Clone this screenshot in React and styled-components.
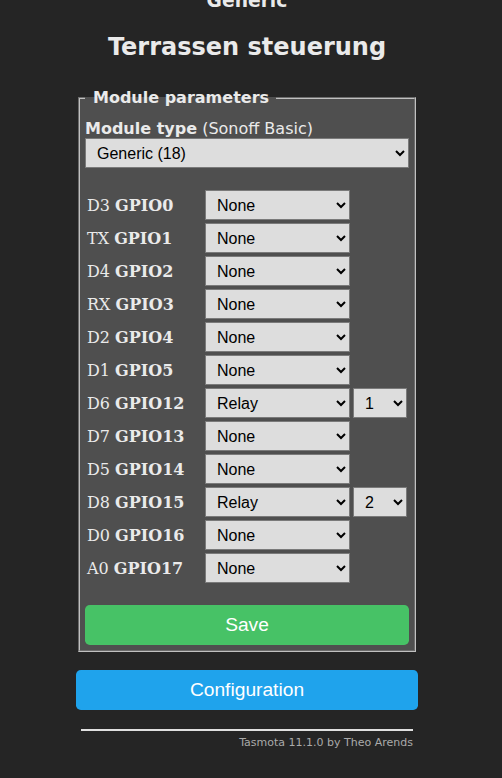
import styled, { createGlobalStyle } from 'styled-components'

const Global = createGlobalStyle`
  html, body { margin: 0; padding: 0; background: #252525; }
  body { font-family: "DejaVu Sans", Verdana, sans-serif; color: #eaeaea; overflow: hidden; }
`

const Page = styled.div`
  width: 342px;
  margin-left: 76px;
`

const Title = styled.h3`
  margin: -10px 0 0;
  font-size: 18.72px;
  text-align: center;
  font-weight: bold;
`

const Heading = styled.h2`
  margin: 22px 0 0;
  font-size: 24px;
  text-align: center;
  font-weight: bold;
`

const Fieldset = styled.fieldset`
  margin: 27px 2px 0;
  padding: 5px;
  background: #4f4f4f;
  border: 2px groove #c0c0c0;
  min-width: 0;
`

const Legend = styled.legend`
  font-weight: bold;
  padding: 0 7px 0 8px;
  margin-left: 0;
`

const TypeLabel = styled.div`
  margin-top: 8px;
  line-height: 18px;
  b { font-weight: bold; }
`

const Select = styled.select`
  box-sizing: border-box;
  height: 30px;
  width: ${p => p.$w || '100%'};
  padding: 0 4px 0 7px;
  font-family: "Liberation Sans", Arial, sans-serif;
  font-size: 16px;
  background: #ddd;
  color: #000;
  border: 1px solid #7a7a7a;
  border-radius: 0;
  outline: none;
`

const Grid = styled.div`
  display: grid;
  grid-template-columns: 115px 145px 54px;
  column-gap: 3px;
  row-gap: 3px;
  margin-top: 22px;
  margin-left: 2px;
  align-items: center;
`

const Pin = styled.div`
  font-family: "DejaVu Serif", Georgia, serif;
  font-size: 16px;
  color: #eaeaea;
  b { font-weight: bold; }
`

const Button = styled.button`
  display: block;
  width: 100%;
  border: 0;
  border-radius: 0.3rem;
  background: ${p => p.$bg};
  color: #fff;
  line-height: 40px;
  font-size: 19.2px;
  font-family: "Liberation Sans", Arial, sans-serif;
  padding: 0;
  margin-top: ${p => p.$mt || 0}px;
  cursor: pointer;
`

const Rule = styled.hr`
  margin: 19px 5px 0;
  border: 0;
  height: 2px;
  background: #e0e0e0;
`

const Footer = styled.div`
  text-align: right;
  font-size: 11px;
  color: #aaa;
  margin: 5px 5px 0;
`

const pins = [
  ['D3', 'GPIO0', 'None'],
  ['TX', 'GPIO1', 'None'],
  ['D4', 'GPIO2', 'None'],
  ['RX', 'GPIO3', 'None'],
  ['D2', 'GPIO4', 'None'],
  ['D1', 'GPIO5', 'None'],
  ['D6', 'GPIO12', 'Relay', '1'],
  ['D7', 'GPIO13', 'None'],
  ['D5', 'GPIO14', 'None'],
  ['D8', 'GPIO15', 'Relay', '2'],
  ['D0', 'GPIO16', 'None'],
  ['A0', 'GPIO17', 'None'],
]

export default function App() {
  return (
    <Page>
      <Global />
      <Title>Generic</Title>
      <Heading>Terrassen steuerung</Heading>
      <Fieldset>
        <Legend>Module parameters</Legend>
        <TypeLabel><b>Module type</b> (Sonoff Basic)</TypeLabel>
        <Select defaultValue="18">
          <option value="18">Generic (18)</option>
        </Select>
        <Grid>
          {pins.map(([d, g, fn, idx]) => [
            <Pin key={g}>{d} <b>{g}</b></Pin>,
            <Select key={g + 's'} $w="145px" defaultValue={fn}>
              <option>{fn}</option>
            </Select>,
            idx ? (
              <Select key={g + 'i'} $w="54px" defaultValue={idx}>
                <option>{idx}</option>
              </Select>
            ) : <span key={g + 'e'} />,
          ])}
        </Grid>
        <Button $bg="#47c266" $mt={22}>Save</Button>
      </Fieldset>
      <Button $bg="#1fa3ec" $mt={18}>Configuration</Button>
      <Rule />
      <Footer>Tasmota 11.1.0 by Theo Arends</Footer>
    </Page>
  )
}
